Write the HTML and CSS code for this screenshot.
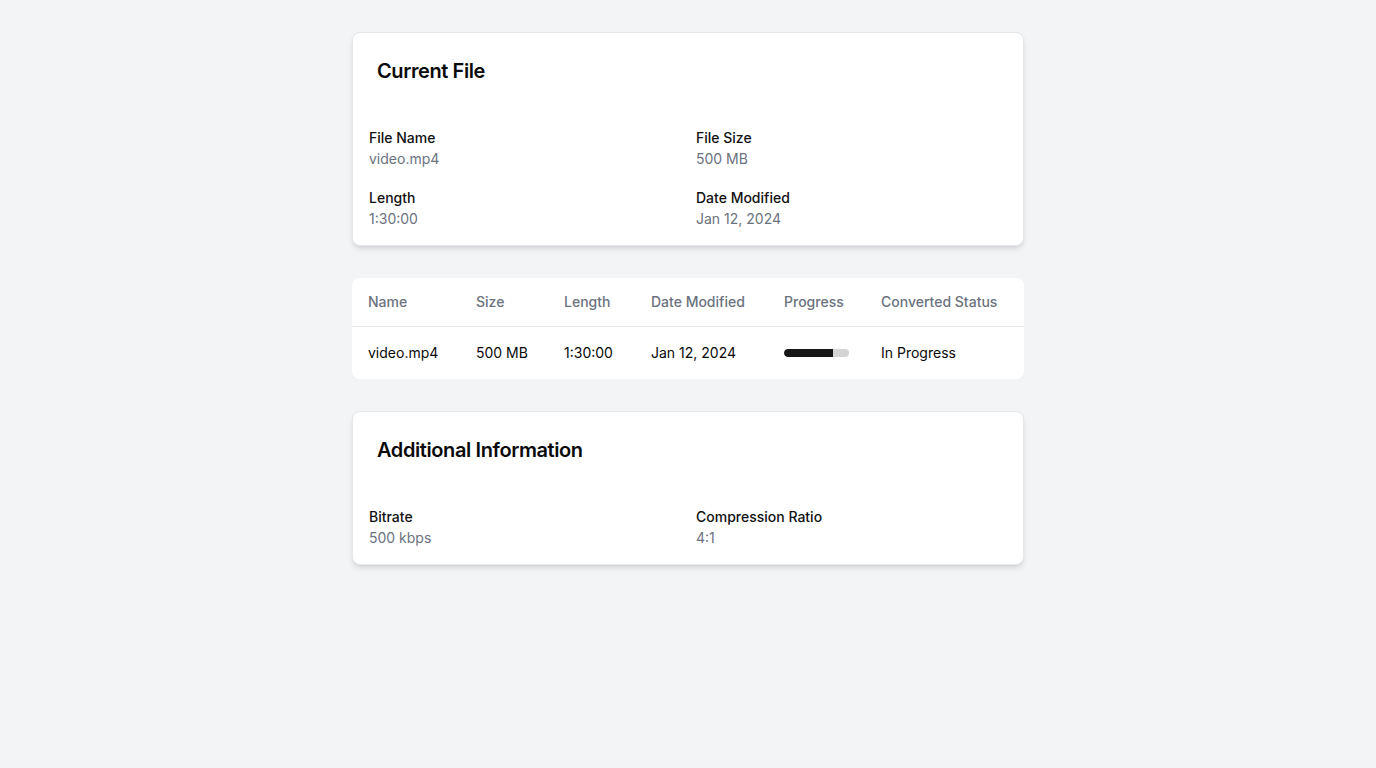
FILE: index.html
```html
<!DOCTYPE html>
<html lang="en">
<head>
<meta charset="utf-8">
<title>File Conversion</title>
<link rel="stylesheet" href="styles.css">
</head>
<body>
<main class="page">
  <section class="card">
    <div class="card-header"><h2 class="card-title">Current File</h2></div>
    <div class="card-content">
      <div class="field"><div class="label">File Name</div><div class="value">video.mp4</div></div>
      <div class="field"><div class="label">File Size</div><div class="value">500 MB</div></div>
      <div class="field"><div class="label">Length</div><div class="value">1:30:00</div></div>
      <div class="field"><div class="label">Date Modified</div><div class="value">Jan 12, 2024</div></div>
    </div>
  </section>

  <section class="table-card">
    <table class="table">
      <thead>
        <tr>
          <th class="c-name">Name</th>
          <th class="c-size">Size</th>
          <th class="c-len">Length</th>
          <th class="c-date">Date Modified</th>
          <th class="c-prog">Progress</th>
          <th class="c-status">Converted Status</th>
        </tr>
      </thead>
      <tbody>
        <tr>
          <td>video.mp4</td>
          <td>500 MB</td>
          <td>1:30:00</td>
          <td>Jan 12, 2024</td>
          <td><div class="progress"><div class="progress-fill" style="width:75%"></div></div></td>
          <td>In Progress</td>
        </tr>
      </tbody>
    </table>
  </section>

  <section class="card">
    <div class="card-header"><h2 class="card-title">Additional Information</h2></div>
    <div class="card-content">
      <div class="field"><div class="label">Bitrate</div><div class="value">500 kbps</div></div>
      <div class="field"><div class="label">Compression Ratio</div><div class="value">4:1</div></div>
    </div>
  </section>
</main>
</body>
</html>
```
FILE: styles.css
```css
* { box-sizing: border-box; }
html, body { margin: 0; padding: 0; }
body {
  background: #f3f4f6;
  font-family: Inter, "Liberation Sans", sans-serif;
  color: #0a0a0a;
  min-height: 100vh;
}
.page {
  width: 672px;
  margin: 0 auto;
  padding: 32px 0;
  display: flex;
  flex-direction: column;
  gap: 32px;
}
.card {
  background: #fff;
  border: 1px solid #e5e7eb;
  border-radius: 8px;
  box-shadow: 0 4px 6px -1px rgba(0,0,0,0.1), 0 2px 4px -2px rgba(0,0,0,0.1);
}
.card-header { padding: 24px; }
.card-title {
  margin: 0;
  font-size: 20px;
  line-height: 28px;
  font-weight: 600;
  letter-spacing: -0.4px;
}
.card-content {
  padding: 19px 16px 15px 16px;
  display: grid;
  grid-template-columns: 1fr 1fr;
  column-gap: 16px;
  row-gap: 18px;
}
.label {
  font-size: 14px;
  line-height: 20px;
  font-weight: 500;
  color: #111;
}
.value {
  font-size: 14px;
  line-height: 22px;
  color: #6b7280;
}
.table-card {
  background: #fff;
  border-radius: 8px;
  overflow: hidden;
}
.table {
  width: 100%;
  border-collapse: collapse;
  table-layout: fixed;
  font-size: 14px;
}
.table th {
  text-align: left;
  font-weight: 500;
  color: #6b7280;
  height: 48px;
  padding: 0 16px;
  border-bottom: 1px solid #e5e7eb;
  white-space: nowrap;
}
.table td {
  height: 53px;
  padding: 0 16px;
  color: #0a0a0a;
  white-space: nowrap;
}
.c-name { width: 108px; }
.c-size { width: 88px; }
.c-len { width: 87px; }
.c-date { width: 133px; }
.c-prog { width: 97px; }
.c-status { width: 159px; }
.progress {
  width: 65px;
  height: 8px;
  border-radius: 4px;
  background: #d4d4d4;
  overflow: hidden;
}
.progress-fill {
  height: 100%;
  background: #171717;
  border-radius: 4px 0 0 4px;
}
```
